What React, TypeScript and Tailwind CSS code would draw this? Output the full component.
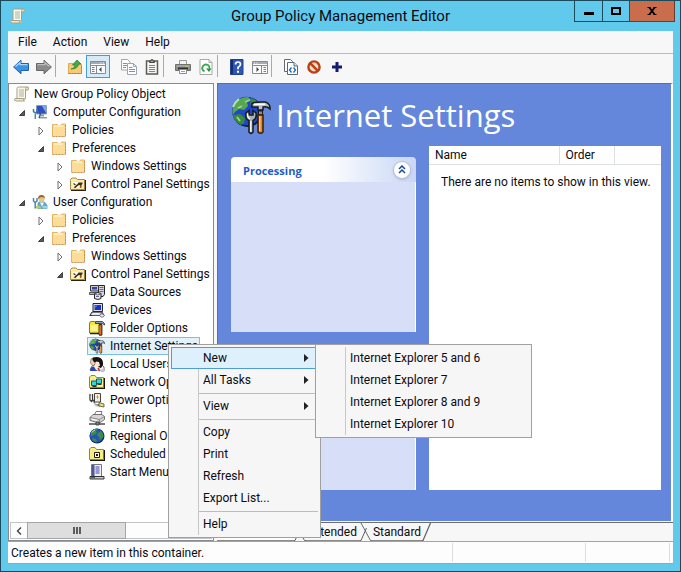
import { useState } from "react";
import type { ReactNode } from "react";

type IconProps = { className?: string };

function ScrollIcon({ className = "h-4 w-4" }: IconProps) {
  return (
    <svg viewBox="0 0 16 16" className={className}>
      <path d="M4 2.500Q4 1 5.500 1H14q1.500 0 1.500 1.500T14 4h-1.500v8.500H4z" fill="#fdf8df" stroke="#a3a08b" />
      <path d="M12.500 4V2.500Q12.500 1 14 1t1.500 1.500T14 4z" fill="#eadfae" stroke="#a3a08b" strokeWidth=".8" />
      <path d="M2 12.500h8.500q-.5 2.500 1 2.500H3q-2.500-.5-1-2.500z" fill="#f6eabc" stroke="#a3a08b" />
      <path d="M10.500 12.500h2q0 2.500-1.500 2.500z" fill="#d8c98e" />
      <path d="M6 4h5M6 6h5M6 8h5M6 10h5" stroke="#99aab5" strokeWidth=".9" />
    </svg>
  );
}

function FolderIcon() {
  return (
    <svg viewBox="0 0 16 16" className="h-4 w-4">
      <path d="M1.500 2.500h5l1 1h2l1-1.500h4v12h-13z" fill="#fbd98b" stroke="#e3b468" />
      <path d="M2 5h12v9H2z" fill="#fcdc96" />
      <path d="M3 4h9" stroke="#fff2c9" strokeWidth="1.500" />
      <path d="M1.500 14.500h13M14.500 3v11" stroke="#c98f55" strokeDasharray="2 1" />
    </svg>
  );
}

function ToolFolderIcon() {
  return (
    <svg viewBox="0 0 16 16" className="h-4 w-4">
      <path d="M.5 4.500V3.500l1.500-1.500h4l1.500 1.500h7v10H.5z" fill="#ffe9a0" stroke="#a38d45" />
      <path d="M1 14.500h14.500V4" fill="none" stroke="#2a2312" strokeWidth="1.200" />
      <path d="M2.500 6h10v6h-10z" fill="#fdfbe6" />
      <path d="M3.500 11.500l4-3.500 1-1.500h4v1.500l-1 1v2.500h-1.500V9L8 9.500l-2.500 2.500z" fill="#3d2b18" />
      <path d="M3.500 7.500l2 1.500" stroke="#4a3a25" strokeWidth="1.300" />
      <path d="M10.500 9.500v2.500" stroke="#a4581f" strokeWidth="1.300" />
    </svg>
  );
}

function ComputerIcon() {
  return (
    <svg viewBox="0 0 16 16" className="h-4 w-4">
      <path d="M4.500 1.500h10v8.500h-10z" fill="#2c4fc4" stroke="#8ba3b8" />
      <path d="M10 2h4v7z" fill="#7ba7ee" />
      <path d="M9 10.500h3v2H9zM7 13h8v1.500H7z" fill="#8f9da8" />
      <path d="M1.500 5v2.500l2 1.500 1.500-1.500V5M3.300 8.500V15" fill="none" stroke="#3b79a8" strokeWidth="1.500" />
      <path d="M6.500 7l2 3-1.500 4" fill="none" stroke="#405c80" strokeWidth="1.500" />
      <path d="M2.700 9.500v5" stroke="#b9dcea" strokeWidth=".7" />
    </svg>
  );
}

function UserIcon() {
  return (
    <svg viewBox="0 0 16 16" className="h-4 w-4">
      <path d="M6 9l3-2 4 1.500 2 3v3H6z" fill="#6ba9cb" stroke="#4986a6" strokeWidth=".7" />
      <path d="M8 8.500l2 4 2-4z" fill="#f4f7f7" />
      <circle cx="9.500" cy="5" r="3" fill="#e8c28f" />
      <path d="M6 5q0-4 3.500-4T13 5l-1-1.500-3-.5z" fill="#93691e" />
      <path d="M1.500 4v3l1.500 1.500L5 7V4M3.200 8v6.500" fill="none" stroke="#4c87ad" strokeWidth="1.500" />
      <path d="M4 12.500q2-2 4 0l2 2H4z" fill="#b8ce61" />
      <path d="M10 12h5v2.500h-4z" fill="#9bd1e2" />
    </svg>
  );
}

function DataSourcesIcon() {
  return (
    <svg viewBox="0 0 16 16" className="h-4 w-4">
      <path d="M9.500 1.500h6v9l-1.500 2H9.500z" fill="#d4d4de" stroke="#222" />
      <path d="M10.500 3.500h4M10.500 5.500h4M10.500 7.500h4" stroke="#666b8b" />
      <path d="M1.500 1.500h8v5.500h-8z" fill="#c9c9d6" stroke="#333" />
      <path d="M3 3h5v2.500H3z" fill="#3941ae" />
      <path d="M.5 8.500h9v2H.5z" fill="#b9b9c6" stroke="#333" strokeWidth=".8" />
      <path d="M5.500 9.500q3.500-2 6.500 0v5q-3 2-6.500 0z" fill="#e6e6ee" stroke="#222" />
      <path d="M5.500 10q3 2 6.500 0M7 12.500h3" fill="none" stroke="#6b6b88" />
    </svg>
  );
}

function DevicesIcon() {
  return (
    <svg viewBox="0 0 16 16" className="h-4 w-4">
      <path d="M4 1.500h9.500v8H4z" fill="#dadbe4" stroke="#25252d" />
      <path d="M5.500 3h6.500v5H5.500z" fill="#1732c5" />
      <path d="M6 3.500h3L6 6z" fill="#4d79ef" />
      <path d="M3 10h10l2 3.500H.8z" fill="#b9bbc9" stroke="#25252d" strokeWidth=".9" />
      <path d="M3.500 11.500h7M3 12.700h8" stroke="#fff" strokeWidth=".8" />
      <ellipse cx="13" cy="13.500" rx="2.200" ry="1.600" fill="#f1f1f5" stroke="#44444d" strokeWidth=".7" />
    </svg>
  );
}

function FolderOptionsIcon() {
  return (
    <svg viewBox="0 0 16 16" className="h-4 w-4">
      <path d="M.5 4V3l1-1.500h4L7 3.500h4V13H.5z" fill="#f4e63c" stroke="#847f20" />
      <path d="M1.500 5h7v6h-7z" fill="#fbf48b" />
      <path d="M1 13.600h10.500" stroke="#20200e" strokeWidth="1.300" />
      <path d="M6.500 3.500V1.500h7l2 2v1.500l-2-1.500h-5z" fill="#88a2b2" stroke="#222f38" strokeWidth=".8" />
      <path d="M10 4.500h3V15l-1.500.7L10 15z" fill="#bd501e" stroke="#371b0c" strokeWidth=".8" />
      <path d="M11 6v8" stroke="#f0a05e" strokeWidth=".8" />
    </svg>
  );
}

function GlobeToolsIcon({ className = "h-4 w-4" }: IconProps) {
  return (
    <svg viewBox="0 0 40 40" className={className}>
      <circle cx="16.500" cy="17" r="15" fill="#101b38" />
      <circle cx="15.500" cy="16" r="14.300" fill="#2147c7" />
      <path d="M4 8q5-6 13-6l3 3-4 2 1 4-4 4-5-1-4 3-2 3-.5-3q0-5 3.500-9z" fill="#56a653" />
      <path d="M3 20l6-1 5 4-1 5-3 2Q4 27 2 21zM20 3q5 1 8 6l-5 3-4-3z" fill="#398a3d" />
      <path d="M8 4q-4 3-6 8" fill="none" stroke="#bfe6ad" strokeWidth="1.800" />
      <path d="M14 7l5-2M7 13l4-2M6 22l3 4" stroke="#9ed58d" strokeWidth="1.800" />
      <path d="M15 18q-1 6 3 7.500V37l2 1.500 2-1.500V25.500q4-2 3-7.500l-3-2.500v4.500h-4v-4.500z" fill="#aab1ae" stroke="#161b1b" strokeWidth="1.500" />
      <path d="M16.500 18.500q0 4 2.500 5.500M19.800 26v11" fill="none" stroke="#fff" strokeWidth="1.200" />
      <path d="M21 12V8.500q4-2 13-1.500 4 1 5 5v2q-3-3-7-2v3h-5v-3z" fill="#b9c2c4" stroke="#161b1b" strokeWidth="1.500" />
      <path d="M23 9.300h11" stroke="#fff" strokeWidth="1.500" />
      <path d="M27.500 16h4v4h-4z" fill="#8a9394" stroke="#161b1b" />
      <path d="M27 20h5v17q-2.500 2.500-5 0z" fill="#e28629" stroke="#3a1d0b" strokeWidth="1.500" />
      <path d="M28.800 21v15" stroke="#ffce82" strokeWidth="1.300" />
    </svg>
  );
}

function LocalUsersIcon() {
  return (
    <svg viewBox="0 0 16 16" className="h-4 w-4">
      <path d="M1 14l2-4 4-2h5l3 3v4z" fill="#f1f1f5" stroke="#3c3d47" strokeWidth=".8" />
      <path d="M2 3l3-1.500L6 8 4 10 1.500 7z" fill="#f2d1ae" stroke="#6c4a36" strokeWidth=".6" />
      <path d="M3.500 2q4-2 8 0 3 2 2.500 7l-2 3-3-1-1-4-3-1-1.500-2z" fill="#131315" />
      <path d="M7 5.500l3 .5 1 3.500-3 2L6 9z" fill="#ffe8cf" />
      <path d="M2 11.500l3-1 2.500 4.500H1z" fill="#2b42be" />
      <path d="M10 11l2 3 3-2v3H8z" fill="#c5c6d0" />
      <path d="M9 12l1.500 3" stroke="#c23129" strokeWidth="1.500" />
    </svg>
  );
}

function NetworkIcon() {
  return (
    <svg viewBox="0 0 16 16" className="h-4 w-4">
      <path d="M.5 4V3L2 1.500h4L7.500 3.500h7v10H.5z" fill="#f6ee8a" stroke="#8d8749" />
      <path d="M1 14.500h14.500V4" fill="none" stroke="#17170f" strokeWidth="1.200" />
      <path d="M7.500 5h5v4.500h-5zM2.500 7h5v4.500h-5z" fill="#30d7dd" stroke="#165d68" />
      <path d="M3.500 12.500h4M8.500 10.500h4" stroke="#31321c" />
    </svg>
  );
}

function PowerIcon() {
  return (
    <svg viewBox="0 0 16 16" className="h-4 w-4">
      <path d="M5.500 1.500h6V10h-6z" fill="#f1eee5" stroke="#45443f" />
      <path d="M7 3h3v4H7z" fill="#fff" />
      <path d="M8.500 3v4M7 5h3" stroke="#c6a531" />
      <path d="M1 2v6l2 2M3.500 2v7M1.500 8.500h3.500q0 5.500 5 4.500h3" fill="none" stroke="#3c3b38" strokeWidth="1.300" />
      <path d="M1.800 4v4h1V4z" fill="#f5f5f0" />
      <path d="M5 11q1 3 4 3.500h2" fill="none" stroke="#d5d2c6" strokeWidth="1.300" />
      <path d="M10 10.500l5 1.500v3l-5-1z" fill="#e8df78" stroke="#44411f" strokeWidth=".7" />
    </svg>
  );
}

function PrinterClassicIcon() {
  return (
    <svg viewBox="0 0 16 16" className="h-4 w-4">
      <path d="M5 6l2-4.500h6L11.500 6z" fill="#fff" stroke="#5a5a5a" strokeWidth=".8" />
      <path d="M1 7.500l3-3h9l2.500 2v3l-5 3.500L1 10.500z" fill="#d7d7d7" stroke="#555" strokeWidth=".8" />
      <path d="M1 7.500l9.500 2 5-3M10.500 9.500v3.200" fill="none" stroke="#767676" strokeWidth=".8" />
      <path d="M3 9l5 1.500" stroke="#fff" />
      <path d="M0 14h16" stroke="#222" strokeWidth="1.200" />
      <path d="M7 12h3v3H7z" fill="#8b8b8b" stroke="#222" strokeWidth=".7" />
    </svg>
  );
}

function GlobeIcon() {
  return (
    <svg viewBox="0 0 16 16" className="h-4 w-4">
      <circle cx="8" cy="8" r="7.500" fill="#14264d" />
      <circle cx="7.600" cy="7.600" r="6.800" fill="#2454b8" />
      <path d="M2 4q3-4 7-3L7 3l1 2-3 2-3 1zM9 5l3-2q3 3 2.500 6L11 12l-1-3-2-2zM3 10l4 1 1 3q-4 0-5-4z" fill="#3c8f45" />
      <path d="M3 4.500q1-2 3-2.500" fill="none" stroke="#b1e2c1" />
    </svg>
  );
}

function ScheduledIcon() {
  return (
    <svg viewBox="0 0 16 16" className="h-4 w-4">
      <path d="M.5 4V3L2 1.500h4L7.500 3.500h7v10H.5z" fill="#f5ed86" stroke="#8d8749" />
      <path d="M1 14.500h14.500V4" fill="none" stroke="#17170f" strokeWidth="1.200" />
      <path d="M5.500 6.500h5v5h-5z" fill="#fffdf0" stroke="#1f1d12" />
      <path d="M7 8h2v2H7z" fill="#1f1d12" />
    </svg>
  );
}

function StartMenuIcon() {
  return (
    <svg viewBox="0 0 16 16" className="h-4 w-4">
      <path d="M2.500.5h10v12h-10z" fill="#eeeef3" stroke="#767687" />
      <path d="M3 1h2.500v11H3z" fill="#4e5b8c" />
      <path d="M6.500 3h4M6.500 5h4M6.500 7h4M6.500 9h4" stroke="#3d43b3" />
      <path d="M1 12.500h14v2.500H1z" fill="#c8c8ca" stroke="#25252a" strokeWidth=".9" />
      <path d="M2 13.700h4" stroke="#31754a" strokeWidth="1.300" />
    </svg>
  );
}

function ArrowIcon({ forward = false }: { forward?: boolean }) {
  return (
    <svg viewBox="0 0 16 16" className={forward ? "h-4 w-4 -scale-x-100" : "h-4 w-4"}>
      <path
        d="M.6 8L8 1.200V4.500h7.500v7H8v3.300z"
        fill={forward ? "#8a8a8a" : "#3c92e4"}
        stroke={forward ? "#666" : "#2361a8"}
        strokeLinejoin="round"
      />
      <path d="M2.500 7.500L7 3.500v2.200h7.500" fill="none" stroke={forward ? "#bdbdbd" : "#a5dbff"} strokeWidth="1.200" />
    </svg>
  );
}

function UpFolderIcon() {
  return (
    <svg viewBox="0 0 16 16" className="h-4 w-4">
      <path d="M1.500 4.500h5l1 1h7v9h-13z" fill="#f8ca74" stroke="#e0a95c" />
      <path d="M1.500 14.500h13V6" fill="none" stroke="#b9763b" strokeDasharray="2 1" />
      <path d="M4 10q4 0 4-4H5.500L10 1l4 4h-2.500Q11 10 4 10z" fill="#43ad45" stroke="#27792d" strokeWidth=".7" />
    </svg>
  );
}

function TreePaneIcon({ flipped = false }: { flipped?: boolean }) {
  return (
    <svg viewBox="0 0 16 16" className={flipped ? "h-4 w-4 -scale-x-100" : "h-4 w-4"}>
      <path d="M.5 2.500h15v12H.5z" fill="#fbfbfb" stroke="#868b92" />
      <path d="M1 3h14v2H1z" fill="#a5abb2" />
      <path d="M10.500 4h1M13 4h1" stroke="#fff" />
      <path d="M.5 6.500h15" stroke="#868b92" />
      <path d="M2 8.500h2.500M2 10.500h2.500M2 12.500h2.500" stroke="#6d7f99" />
      <path d="M6.500 7v7" stroke="#868b92" />
      <path d="M11.500 8v5L9 10.500z" fill="#444" />
    </svg>
  );
}

function CopyIcon() {
  return (
    <svg viewBox="0 0 16 16" className="h-4 w-4">
      <path d="M.5.5h6l2.500 2.500v8H.5z" fill="#fff" stroke="#9aa6b5" />
      <path d="M2 4.500h4M2 6.500h4M2 8.500h3" stroke="#7893b9" />
      <path d="M6.500 4.500h6l3 3v8h-9z" fill="#fff" stroke="#9aa6b5" />
      <path d="M12.500 4.500v3h3" fill="none" stroke="#9aa6b5" />
      <path d="M8 8.500h3.500M8 10.500h6M8 12.500h6" stroke="#7893b9" />
    </svg>
  );
}

function ClipboardIcon() {
  return (
    <svg viewBox="0 0 16 16" className="h-4 w-4">
      <path d="M2.500 2h11v13h-11z" fill="#f4f4f4" stroke="#5b5e55" strokeWidth="1.500" />
      <path d="M5.500 3.500V2h1.500V.8h2V2h1.500v1.500z" fill="#a5a59e" stroke="#45463f" />
      <path d="M5 6.500h6M5 8.500h6M5 10.500h6M5 12.500h6" stroke="#85877f" />
    </svg>
  );
}

function PrinterIcon() {
  return (
    <svg viewBox="0 0 16 16" className="h-4 w-4">
      <path d="M4.500 1.500h7V6h-7z" fill="#f2f2f2" stroke="#999" />
      <path d="M.5 5.500h15v6H.5z" fill="#8d8d8d" stroke="#707070" />
      <path d="M1.500 7h13" stroke="#b8b8b8" />
      <path d="M3 9.500h10" stroke="#2e3130" strokeWidth="2" />
      <path d="M11 7.500h2" stroke="#bfd24d" />
      <path d="M4.500 10.500h7v4h-7z" fill="#fff" stroke="#889" />
      <path d="M6 12.500h4" stroke="#8c9fbd" />
    </svg>
  );
}

function RefreshIcon() {
  return (
    <svg viewBox="0 0 16 16" className="h-4 w-4">
      <path d="M2 .5h9l3 3v12H2z" fill="#fff" stroke="#a8a8a8" />
      <path d="M11 .5v3h3" fill="none" stroke="#a8a8a8" />
      <path d="M6.500 12.500q-3.500-2-1.500-5.500 2-2.500 5-1 2 1.500 1.500 4" fill="none" stroke="#3aa954" strokeWidth="1.900" />
      <path d="M8 9.500h5.500L11 13z" fill="#268f42" />
    </svg>
  );
}

function HelpIcon() {
  return (
    <svg viewBox="0 0 16 16" className="h-4 w-4">
      <path d="M1.500.5h12.500v15H1.500z" fill="#2f56b5" stroke="#24418b" />
      <path d="M2 1h2v14H2z" fill="#142d70" />
      <path d="M6.500 5.500Q6.500 3 9 3t2.500 2.200Q11.500 7 9 8.500v1.700" fill="none" stroke="#fff" strokeWidth="1.700" />
      <path d="M8 11.800h2v2H8z" fill="#fff" />
    </svg>
  );
}

function CodeDocIcon() {
  return (
    <svg viewBox="0 0 16 16" className="h-4 w-4">
      <path d="M1.500.5h6l2 2v10h-8z" fill="#fff" stroke="#616b76" />
      <path d="M4.500 3.500h6.500l3.500 3.500v8.500h-10z" fill="#fff" stroke="#5b6772" />
      <path d="M11 3.500V7h3.500" fill="#dde3e8" stroke="#5b6772" />
      <path d="M8.500 8.500l-2 2.500 2 2.500M10.500 8.500l2 2.500-2 2.500" fill="none" stroke="#1769bb" strokeWidth="1.300" />
    </svg>
  );
}

function StopIcon() {
  return (
    <svg viewBox="0 0 16 16" className="h-4 w-4">
      <circle cx="8" cy="8" r="5.600" fill="#f5d8c8" stroke="#b84213" strokeWidth="2.400" />
      <path d="M4.200 4.200l7.600 7.600" stroke="#b84213" strokeWidth="2.400" />
    </svg>
  );
}

function PlusIcon() {
  return (
    <svg viewBox="0 0 16 16" className="h-4 w-4">
      <path d="M8 3v10M3 8h10" stroke="#171a72" strokeWidth="3" />
    </svg>
  );
}

type TreeNode = {
  label: string;
  icon: ReactNode;
  state?: "open" | "closed";
  selected?: boolean;
  children?: TreeNode[];
};

const userItems: TreeNode[] = [
  { label: "Data Sources", icon: <DataSourcesIcon /> },
  { label: "Devices", icon: <DevicesIcon /> },
  { label: "Folder Options", icon: <FolderOptionsIcon /> },
  { label: "Internet Settings", icon: <GlobeToolsIcon />, selected: true },
  { label: "Local Users", icon: <LocalUsersIcon /> },
  { label: "Network Options", icon: <NetworkIcon /> },
  { label: "Power Options", icon: <PowerIcon /> },
  { label: "Printers", icon: <PrinterClassicIcon /> },
  { label: "Regional Options", icon: <GlobeIcon /> },
  { label: "Scheduled Tasks", icon: <ScheduledIcon /> },
  { label: "Start Menu", icon: <StartMenuIcon /> },
];

const tree: TreeNode[] = [
  {
    label: "Computer Configuration",
    icon: <ComputerIcon />,
    state: "open",
    children: [
      { label: "Policies", icon: <FolderIcon />, state: "closed" },
      {
        label: "Preferences",
        icon: <FolderIcon />,
        state: "open",
        children: [
          { label: "Windows Settings", icon: <FolderIcon />, state: "closed" },
          { label: "Control Panel Settings", icon: <ToolFolderIcon />, state: "closed" },
        ],
      },
    ],
  },
  {
    label: "User Configuration",
    icon: <UserIcon />,
    state: "open",
    children: [
      { label: "Policies", icon: <FolderIcon />, state: "closed" },
      {
        label: "Preferences",
        icon: <FolderIcon />,
        state: "open",
        children: [
          { label: "Windows Settings", icon: <FolderIcon />, state: "closed" },
          {
            label: "Control Panel Settings",
            icon: <ToolFolderIcon />,
            state: "open",
            children: userItems,
          },
        ],
      },
    ],
  },
];

function TreeButton({ node }: { node: TreeNode }) {
  return (
    <button
      type="button"
      className={
        node.selected
          ? "flex h-[18px] items-center gap-[5px] border border-[#7cc0e4] bg-[#e3f1fa] pr-px pl-px whitespace-nowrap"
          : "flex h-[18px] items-center gap-[5px] border border-transparent pr-px pl-px whitespace-nowrap"
      }
    >
      {node.icon}
      {node.label}
    </button>
  );
}

function TreeList({ nodes, nested = false }: { nodes: TreeNode[]; nested?: boolean }) {
  return (
    <ul className={nested ? "pl-[19px]" : ""}>
      {nodes.map((node) => (
        <li key={node.label}>
          <div className="flex items-center">
            <span className="flex w-[19px] shrink-0 justify-end pt-[2px] pr-1">
              {node.state === "open" ? (
                <svg viewBox="0 0 8 8" className="h-2 w-2">
                  <path d="M6.500 1.500v5h-5z" fill="#595959" stroke="#262626" strokeWidth=".8" />
                </svg>
              ) : null}
              {node.state === "closed" ? (
                <svg viewBox="0 0 8 10" className="h-[10px] w-2">
                  <path d="M2 1l4 4-4 4z" fill="#fff" stroke="#6e6e6e" />
                </svg>
              ) : null}
            </span>
            <TreeButton node={node} />
          </div>
          {node.children ? <TreeList nodes={node.children} nested /> : null}
        </li>
      ))}
    </ul>
  );
}

type Tool = { label: string; icon: ReactNode; active?: boolean };

const toolGroups: { line: boolean; tools: Tool[] }[] = [
  {
    line: true,
    tools: [
      { label: "Back", icon: <ArrowIcon /> },
      { label: "Forward", icon: <ArrowIcon forward /> },
    ],
  },
  {
    line: false,
    tools: [
      { label: "Up one level", icon: <UpFolderIcon /> },
      { label: "Show console tree", icon: <TreePaneIcon />, active: true },
    ],
  },
  {
    line: true,
    tools: [
      { label: "Copy", icon: <CopyIcon /> },
      { label: "Paste", icon: <ClipboardIcon /> },
    ],
  },
  {
    line: true,
    tools: [
      { label: "Print", icon: <PrinterIcon /> },
      { label: "Refresh", icon: <RefreshIcon /> },
    ],
  },
  {
    line: true,
    tools: [
      { label: "Help", icon: <HelpIcon /> },
      { label: "Show action pane", icon: <TreePaneIcon flipped /> },
    ],
  },
  {
    line: false,
    tools: [
      { label: "Display XML", icon: <CodeDocIcon /> },
      { label: "Stop", icon: <StopIcon /> },
      { label: "Add", icon: <PlusIcon /> },
    ],
  },
];

function Toolbar() {
  return (
    <div className="flex h-[29px] bg-[#f7f7f7] pt-px pl-px">
      {toolGroups.map((group, i) => (
        <div key={i} className="flex">
          {group.tools.map((tool) => (
            <button
              key={tool.label}
              type="button"
              aria-label={tool.label}
              className={
                tool.active
                  ? "flex h-[23px] w-6 items-center justify-center border border-[#3f9fdc] bg-[#d5ebf9]"
                  : "flex h-[23px] w-[23px] items-center justify-center"
              }
            >
              {tool.icon}
            </button>
          ))}
          <span className={group.line ? "h-[22px] w-2 border-l border-[#a9a9a9]" : "w-[7px]"} />
        </div>
      ))}
    </div>
  );
}

function TitleBar() {
  return (
    <header className="grid h-[30px] grid-cols-[1fr_auto_1fr]">
      <div className="flex items-center pl-2">
        <ScrollIcon className="h-4 w-4" />
      </div>
      <h1 className="flex items-center text-[15px]">Group Policy Management Editor</h1>
      <div className="mr-[5px] flex h-[21px] justify-end">
        <button
          type="button"
          aria-label="Minimize"
          className="flex w-[29px] items-center justify-center border border-t-0 border-[#1d4b5c]"
        >
          <span className="mt-1 h-[3px] w-[10px] bg-black" />
        </button>
        <button
          type="button"
          aria-label="Maximize"
          className="flex w-[26px] items-center justify-center border-b border-[#1d4b5c]"
        >
          <span className="h-2 w-[10px] border-2 border-black" />
        </button>
        <button
          type="button"
          aria-label="Close"
          className="flex w-[46px] items-center justify-center border border-t-0 border-[#6b3a2a] bg-[#c96d4c]"
        >
          <svg viewBox="0 0 10 8" className="h-2 w-[10px]">
            <path d="M2 0l6 8M8 0L2 8" stroke="#000" strokeWidth="1.800" />
            <path d="M.5.5h3M6.500.5h3M.5 7.500h3M6.500 7.500h3" stroke="#000" />
          </svg>
        </button>
      </div>
    </header>
  );
}

function TaskBox({ title, className }: { title: string; className: string }) {
  return (
    <section className={className}>
      <div className="flex h-[25px] items-center justify-between rounded-t-sm bg-linear-to-r from-white from-50% to-[#c9d6f5] pr-[5px] pl-3">
        <h3 className="pt-[2px] font-['Open_Sans',sans-serif] text-[11px] font-bold text-[#215dc6]">{title}</h3>
        <button
          type="button"
          aria-label={title}
          className="flex h-[18px] w-[18px] items-center justify-center rounded-full border border-[#b5c1de] bg-white shadow-sm"
        >
          <svg viewBox="0 0 8 9" className="h-[9px] w-2">
            <path d="M1 4l3-3 3 3M1 8l3-3 3 3" fill="none" stroke="#174a9e" strokeWidth="1.500" />
          </svg>
        </button>
      </div>
      <div className="flex-1 border-r border-white bg-[#d6dff7]" />
    </section>
  );
}

function ResultsTable() {
  return (
    <div className="flex-1 bg-white">
      <table className="w-full table-fixed border-collapse">
        <thead>
          <tr className="h-[18px] border-b border-[#dcdfe4] text-left">
            <th className="w-[130px] border-r border-[#dcdfe4] pl-[6px] font-normal">Name</th>
            <th className="w-[55px] border-r border-[#dcdfe4] pl-[6px] font-normal">Order</th>
            <th />
          </tr>
        </thead>
        <tbody>
          <tr>
            <td colSpan={3} className="pt-[9px] pl-3 whitespace-nowrap">
              There are no items to show in this view.
            </td>
          </tr>
        </tbody>
      </table>
    </div>
  );
}

function TabEdge() {
  return (
    <svg viewBox="0 0 12 18" className="h-[18px] w-3">
      <path d="M1 0l9.500 17.500H12" fill="none" stroke="#6a6a6a" />
      <path d="M0 17.500h1L6.500 5" fill="none" stroke="#5f5f5f" />
    </svg>
  );
}

function Tabs() {
  return (
    <div role="tablist" className="flex h-[19px] border-t border-[#6e6e6e] bg-[#f7f7f7]">
      <button
        type="button"
        role="tab"
        aria-selected="true"
        aria-label="Preferences"
        className="w-[77px] border-b border-[#8a8a8a] bg-white"
      />
      <TabEdge />
      <button type="button" role="tab" className="flex w-[54px] items-center justify-end border-b border-[#8a8a8a] pr-[3px]">
        Extended
      </button>
      <TabEdge />
      <button type="button" role="tab" className="flex w-[50px] items-center justify-center border-b border-[#8a8a8a]">
        Standard
      </button>
      <svg viewBox="0 0 10 18" className="h-[18px] w-[10px]">
        <path d="M0 17.500h1L8.500 0" fill="none" stroke="#5f5f5f" strokeWidth="1.200" />
      </svg>
    </div>
  );
}

function HorizontalScrollbar() {
  return (
    <div className="mx-px mb-px flex h-[17px] border-t border-b border-[#c4c4c4] bg-[#fdfdfd]">
      <button type="button" aria-label="Scroll left" className="flex w-[17px] items-center justify-center border-l border-[#c4c4c4]">
        <svg viewBox="0 0 6 8" className="h-2 w-[6px]">
          <path d="M5 .5L1.500 4 5 7.500" fill="none" stroke="#444" strokeWidth="1.400" />
        </svg>
      </button>
      <button
        type="button"
        aria-label="Scroll thumb"
        className="-my-px flex w-[99px] items-center justify-center gap-px border border-[#a5a5a5] bg-[#dedede]"
      >
        <span className="h-[7px] w-[2px] bg-[#5c5c5c]" />
        <span className="h-[7px] w-[2px] bg-[#5c5c5c]" />
        <span className="h-[7px] w-[2px] bg-[#5c5c5c]" />
      </button>
    </div>
  );
}

const menuGroups = [["New", "All Tasks"], ["View"], ["Copy", "Print", "Refresh", "Export List..."], ["Help"]];
const withSubmenu = ["New", "All Tasks", "View"];
const newItems = ["Internet Explorer 5 and 6", "Internet Explorer 7", "Internet Explorer 8 and 9", "Internet Explorer 10"];

function ContextMenu() {
  const [active, setActive] = useState("New");

  return (
    <div className="absolute top-[343px] left-[167px]">
      <div role="menu" className="relative w-[153px] border border-[#a0a0a0] bg-[#f6f6f6] p-[2px]">
        <span className="absolute top-[2px] bottom-[2px] left-[29px] w-px bg-[#c8c8c8]" />
        {menuGroups.map((group, i) => (
          <div key={i}>
            {i > 0 ? <hr className="my-px ml-7 h-[2px] border-t-0 border-b border-[#bdbdbd]" /> : null}
            {group.map((item) => (
              <button
                key={item}
                type="button"
                role="menuitem"
                onMouseEnter={() => setActive(item)}
                className={
                  active === item
                    ? "relative flex h-[22px] w-full items-center justify-between border border-[#4d9fd3] bg-[#ddf0fb] pr-2 pl-[31px]"
                    : "flex h-[22px] w-full items-center justify-between border border-transparent pr-2 pl-[31px]"
                }
              >
                {item}
                {withSubmenu.includes(item) ? (
                  <svg viewBox="0 0 5 8" className="h-2 w-[5px]">
                    <path d="M0 0l4.500 4L0 8z" fill="#222" />
                  </svg>
                ) : null}
              </button>
            ))}
          </div>
        ))}
      </div>
      {active === "New" ? (
        <div role="menu" className="absolute top-0 left-[147px] w-[217px] border border-[#a0a0a0] bg-[#f6f6f6] p-[2px]">
          <span className="absolute top-[2px] bottom-[2px] left-[29px] w-px bg-[#c8c8c8]" />
          {newItems.map((item) => (
            <button key={item} type="button" role="menuitem" className="flex h-[22px] w-full items-center pl-8">
              {item}
            </button>
          ))}
        </div>
      ) : null}
    </div>
  );
}

export default function App() {
  return (
    <div className="relative flex h-screen flex-col border border-[#1b4a5b] bg-[#61caec] font-[Roboto,sans-serif] text-xs leading-4 text-[#0a0a14]">
      <TitleBar />
      <div className="mx-[7px] mb-[7px] flex min-h-0 flex-1 flex-col bg-[#f7f7f7]">
        <nav className="flex h-[23px] items-center gap-4 border-b border-[#bababa] px-[10px]">
          <button type="button">File</button>
          <button type="button">Action</button>
          <button type="button">View</button>
          <button type="button">Help</button>
        </nav>
        <Toolbar />

        <main className="flex min-h-0 flex-1 gap-[3px]">
          <aside className="flex w-[206px] shrink-0 flex-col overflow-hidden border border-[#868a91] bg-white">
            <div className="min-h-0 flex-1 overflow-hidden pt-px pl-[2px]">
              <TreeButton node={{ label: "New Group Policy Object", icon: <ScrollIcon /> }} />
              <TreeList nodes={tree} />
            </div>
            <HorizontalScrollbar />
          </aside>

          <div className="flex min-w-0 flex-1 flex-col">
            <div className="mb-px flex min-h-0 flex-1 flex-col border-t border-r-2 border-l border-t-[#6a6f80] border-r-white border-l-[#6a6f80] bg-[#6487dc] pr-[10px] pb-[31px] pl-[13px]">
              <div className="flex h-[62px] items-center gap-[5px]">
                <GlobeToolsIcon className="h-10 w-10" />
                <h2 className="font-['Open_Sans',sans-serif] text-[31px] text-white">Internet Settings</h2>
              </div>
              <div className="flex min-h-0 flex-1 gap-[13px]">
                <div className="mt-[11px] flex w-[185px] shrink-0 flex-col gap-[14px]">
                  <TaskBox title="Processing" className="flex h-[175px] flex-col" />
                  <TaskBox title="Description" className="flex flex-1 flex-col" />
                </div>
                <ResultsTable />
              </div>
            </div>
            <Tabs />
          </div>
        </main>

        <footer className="flex h-[23px] items-center border-t border-b border-[#a3a3a3] bg-[#fdfdfd]">
          <span className="flex-1 pl-[3px]">Creates a new item in this container.</span>
          <span className="h-[19px] w-[133px] border-l border-[#dedede]" />
          <span className="h-[19px] w-[85px] border-r border-l border-[#dedede]" />
          <span className="w-[3px]" />
        </footer>
      </div>
      <ContextMenu />
    </div>
  );
}
